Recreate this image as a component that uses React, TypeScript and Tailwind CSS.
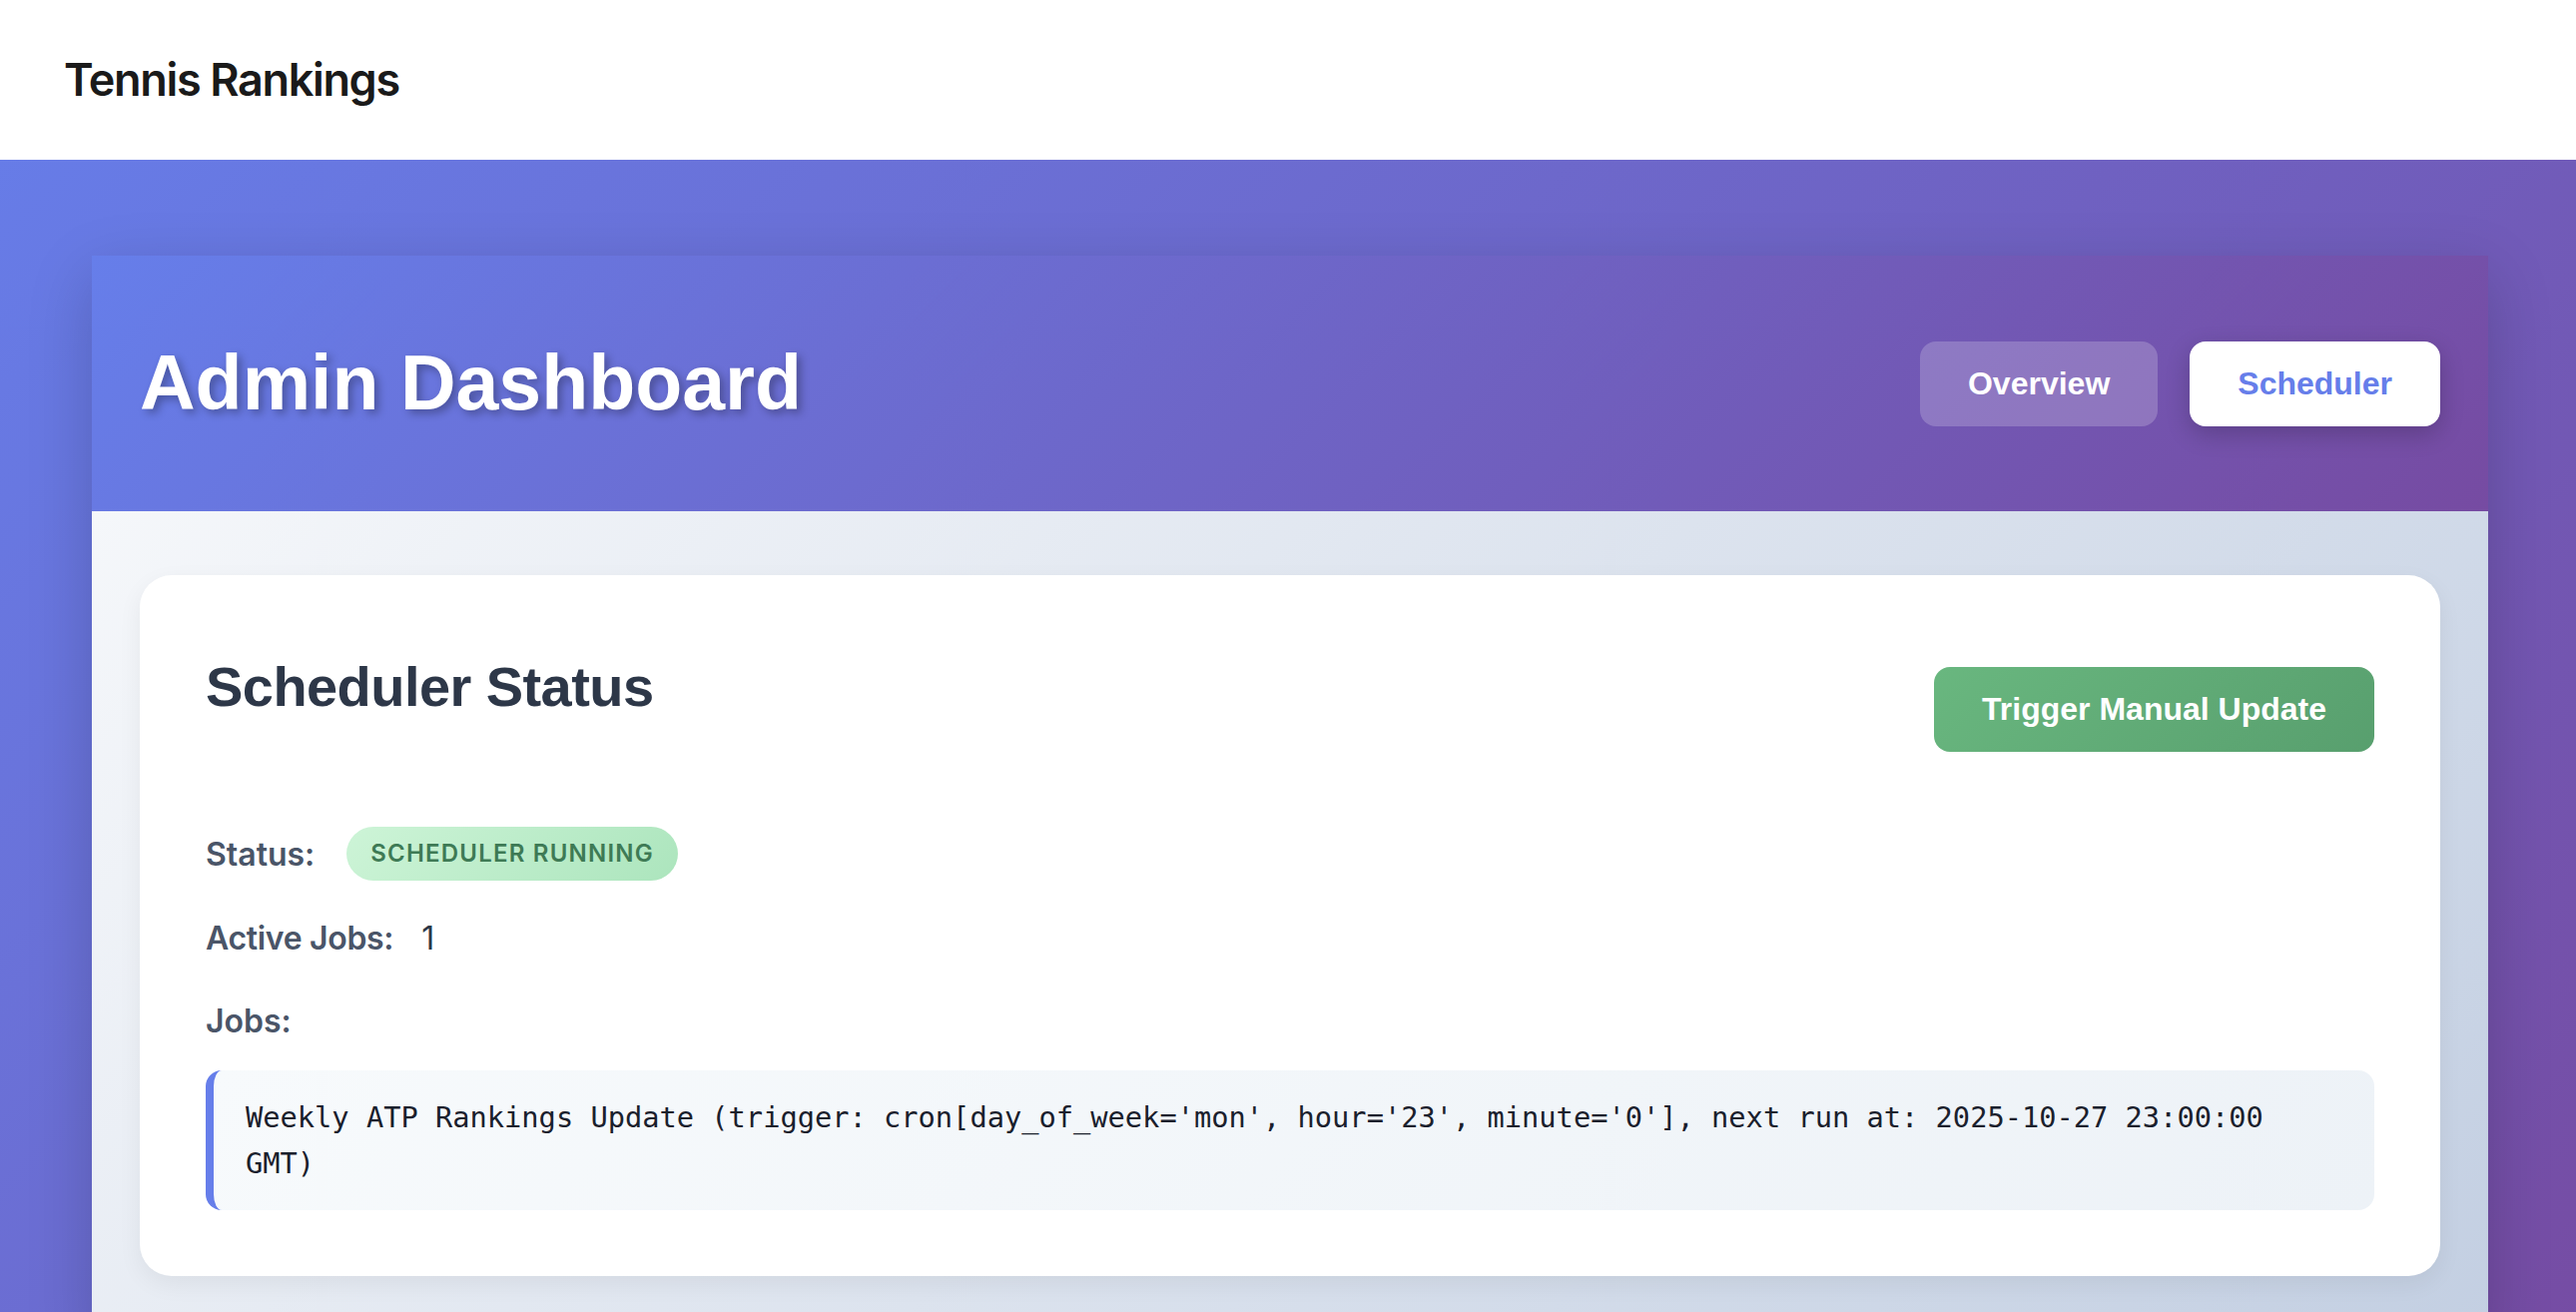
const jobs = [
  "Weekly ATP Rankings Update (trigger: cron[day_of_week='mon', hour='23', minute='0'], next run at: 2025-10-27 23:00:00 GMT)",
];

const App = () => {
  return (
    <div className="min-h-screen bg-[linear-gradient(135deg,#667eea_0%,#764ba2_100%)] font-['Inter',sans-serif]">
      {/* Top nav */}
      <nav className="h-[160px] bg-white flex items-center px-16">
        <span className="text-[45px] font-semibold tracking-[-0.03em] text-[#1a1a1a]">
          Tennis Rankings
        </span>
      </nav>

      <div className="pt-[96px] pb-24 pl-1">
        <div className="max-w-[2400px] mx-auto shadow-[0_20px_60px_rgba(0,0,0,0.18)]">
          {/* Header */}
          <div className="h-[256px] px-12 flex items-center justify-between bg-[linear-gradient(135deg,#667eea_0%,#764ba2_100%)]">
            <h1 className="font-['Liberation_Sans',Arial,sans-serif] text-[77px] font-bold text-white [text-shadow:4px_4px_8px_rgba(0,0,0,0.3)]">
              Admin Dashboard
            </h1>
            <div className="flex gap-8 font-['Liberation_Sans',Arial,sans-serif]">
              <button className="px-12 py-6 rounded-2xl bg-white/20 text-white text-[32px] leading-[37px] font-bold">
                Overview
              </button>
              <button className="px-12 py-6 rounded-2xl bg-white text-[#667eea] text-[32px] leading-[37px] font-bold shadow-[0_8px_24px_rgba(0,0,0,0.2)]">
                Scheduler
              </button>
            </div>
          </div>

          {/* Content */}
          <div className="px-12 pt-16 pb-16 bg-[linear-gradient(135deg,#f5f7fa_0%,#c3cfe2_100%)]">
            <div className="bg-white rounded-[32px] px-[66px] pt-[70px] pb-[66px] shadow-[0_8px_24px_rgba(0,0,0,0.06)]">
              <div className="flex justify-between items-start">
                <h2 className="font-['Liberation_Sans',Arial,sans-serif] text-[56px] font-bold tracking-[-0.01em] text-[#2d3748]">
                  Scheduler Status
                </h2>
                <button className="mt-[22px] px-12 py-6 rounded-2xl bg-[linear-gradient(135deg,#69b77f_0%,#589f6e_100%)] text-white font-['Liberation_Sans',Arial,sans-serif] text-[32px] leading-[37px] font-bold">
                  Trigger Manual Update
                </button>
              </div>

              <div className="mt-[75px] flex items-center gap-8 mb-8">
                <span className="text-[32px] leading-[51px] font-semibold text-[#4a5568]">
                  Status:
                </span>
                <span className="px-6 py-3 rounded-full bg-[linear-gradient(135deg,#cdf4d7_0%,#ace5bd_100%)] text-[#3e7a55] text-[24px] leading-[30px] font-semibold tracking-[0.05em] uppercase">
                  Scheduler Running
                </span>
              </div>

              <div className="flex items-center gap-7 mb-8">
                <span className="text-[32px] leading-[51px] font-semibold tracking-[-0.01em] text-[#4a5568]">
                  Active Jobs:
                </span>
                <span className="text-[32px] leading-[51px] text-[#2d3748]">
                  {jobs.length}
                </span>
              </div>

              <div className="text-[32px] leading-[51px] font-semibold text-[#4a5568]">
                Jobs:
              </div>

              <div className="mt-6 flex flex-col gap-4">
                {jobs.map((job) => (
                  <div
                    key={job}
                    className="border-l-8 border-[#667eea] rounded-2xl px-8 py-6 bg-[linear-gradient(135deg,#f7fafc_0%,#edf2f7_100%)] font-['DejaVu_Sans_Mono',monospace] text-[28.7px] leading-[46px] text-[#1a202c]"
                  >
                    {job}
                  </div>
                ))}
              </div>
            </div>
          </div>
        </div>
      </div>
    </div>
  );
};

export default App;
